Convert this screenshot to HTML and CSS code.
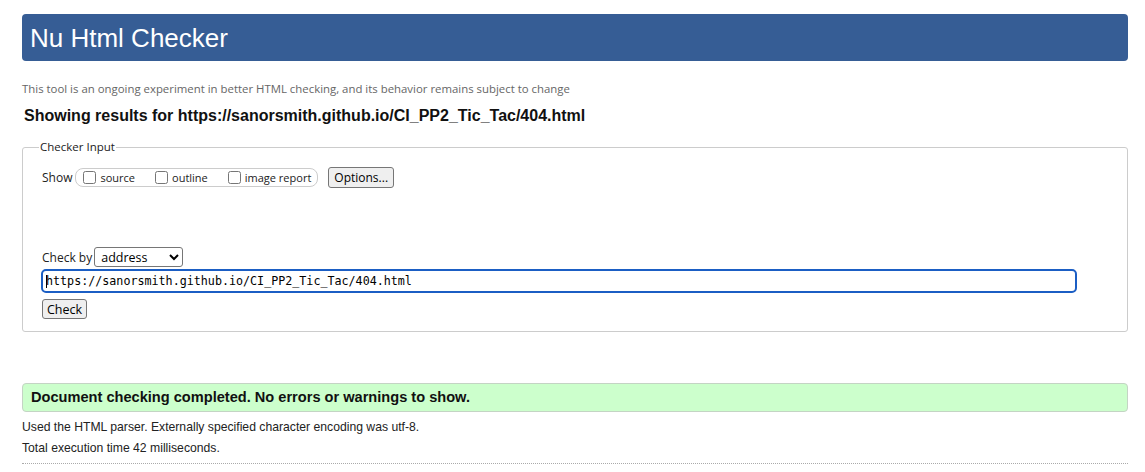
FILE: index.html
```html
<!DOCTYPE html>
<html>
<head>
<meta charset="utf-8">
<title>Nu Html Checker</title>
<link rel="stylesheet" href="styles.css">
</head>
<body>
<div class="page">
  <header class="banner"><h1 class="title">Nu Html Checker</h1></header>
  <p class="intro">This tool is an ongoing experiment in better HTML checking, and its behavior remains subject to change</p>
  <h2 class="results-for">Showing results for https://sanorsmith.github.io/CI_PP2_Tic_Tac/404.html</h2>
  <fieldset class="checker">
    <legend class="legend">Checker Input</legend>
    <div class="show-row">
      <span class="show-label">Show</span>
      <span class="opts">
        <label class="opt"><input type="checkbox" class="cb">source</label>
        <label class="opt"><input type="checkbox" class="cb">outline</label>
        <label class="opt"><input type="checkbox" class="cb">image report</label>
      </span>
      <button class="btn options">Options...</button>
    </div>
    <div class="checkby-row">
      <span class="checkby-label">Check by</span>
      <select class="select"><option>address</option></select>
    </div>
    <div class="url-row">
      <input class="url" type="text" value="https://sanorsmith.github.io/CI_PP2_Tic_Tac/404.html"><span class="caret"></span>
    </div>
    <div class="submit-row"><button class="btn check">Check</button></div>
  </fieldset>
  <div class="success">Document checking completed. No errors or warnings to show.</div>
  <p class="meta first">Used the HTML parser. Externally specified character encoding was utf-8.</p>
  <p class="meta">Total execution time 42 milliseconds.</p>
  <hr class="dotted">
</div>
</body>
</html>
```
FILE: styles.css
```css
html, body {
  margin: 0;
  padding: 0;
  background: #fff;
}
body {
  font-family: "Liberation Sans", Arial, sans-serif;
  color: #000;
}
.page {
  padding: 14px 17px 0 22px;
}
.banner {
  height: 47px;
  background: #365d95;
  border-radius: 4px;
  display: flex;
  align-items: center;
  padding-left: 8px;
}
.title {
  margin: 0;
  font-family: "Liberation Sans", Arial, sans-serif;
  font-weight: normal;
  font-size: 26px;
  line-height: 30px;
  color: #fff;
}
.intro {
  margin: 20px 0 0 0;
  font-family: "Open Sans", sans-serif;
  font-size: 11.4px;
  line-height: 16px;
  color: #666;
}
.results-for {
  margin: 10px 0 0 2px;
  font-family: "Liberation Sans", Arial, sans-serif;
  font-size: 16px;
  line-height: 18px;
  font-weight: bold;
  color: #111;
}
.checker {
  margin: 15px 0 0 0;
  border: 1px solid #ccc;
  border-radius: 3px;
  padding: 13px 19px 12px 19px;
  min-width: 0;
}
.legend {
  font-family: "Open Sans", sans-serif;
  font-size: 11.5px;
  line-height: 14px;
  color: #222;
  padding: 0 1px;
  margin-left: -3px;
}
.show-row {
  display: flex;
  align-items: center;
  height: 21px;
  font-family: "Open Sans", sans-serif;
  font-size: 12px;
  color: #222;
}
.show-label {
  margin-right: 3px;
}
.opts {
  display: flex;
  align-items: center;
  height: 17px;
  border: 1px solid #ccc;
  border-radius: 8px;
  padding: 0 6px 0 4px;
  gap: 17px;
  font-size: 11px;
}
.opt {
  display: flex;
  align-items: center;
}
.cb {
  width: 13px;
  height: 13px;
  margin: 0 4px 0 3px;
}
.btn {
  font-family: "Open Sans", sans-serif;
  font-size: 12px;
  background: #efefef;
  border: 1px solid #767676;
  border-radius: 3px;
  color: #000;
  padding: 0 5px;
}
.options {
  margin-left: 10px;
  height: 21px;
}
.checkby-row {
  margin-top: 59px;
  display: flex;
  align-items: center;
  height: 20px;
  font-family: "Open Sans", sans-serif;
  font-size: 12px;
  color: #222;
}
.checkby-label {
  margin-right: 2px;
}
.select {
  width: 89px;
  height: 20px;
  font-family: "Open Sans", sans-serif;
  font-size: 12.5px;
  border: 1px solid #767676;
  border-radius: 3px;
  background: #fff;
  padding: 0 2px;
}
.url-row {
  margin-top: 2px;
  position: relative;
  height: 24px;
}
.url {
  box-sizing: border-box;
  width: 1036px;
  height: 24px;
  margin-left: -1px;
  border: 2px solid #1b5ec4;
  border-radius: 5px;
  padding: 0 3px;
  font-family: "DejaVu Sans Mono", monospace;
  font-size: 11.7px;
  color: #000;
  outline: none;
}
.caret {
  position: absolute;
  left: 4px;
  top: 6px;
  width: 1px;
  height: 13px;
  background: #000;
}
.submit-row {
  margin-top: 6px;
  height: 20px;
}
.check {
  height: 20px;
  font-size: 12.5px;
  padding: 0 4px;
}
.success {
  margin-top: 51px;
  height: 27px;
  line-height: 27px;
  background: #ccffcc;
  border: 1px solid #c4d4c4;
  border-radius: 4px;
  padding-left: 8px;
  font-weight: bold;
  font-size: 14.6px;
  color: #111;
}
.meta {
  margin: 0;
  font-size: 12.2px;
  line-height: 21px;
  color: #222;
}
.meta.first {
  margin-top: 5px;
}
.dotted {
  margin: 4px 0 0 0;
  border: 0;
  border-top: 1px dotted #aaa;
  height: 0;
}
```
